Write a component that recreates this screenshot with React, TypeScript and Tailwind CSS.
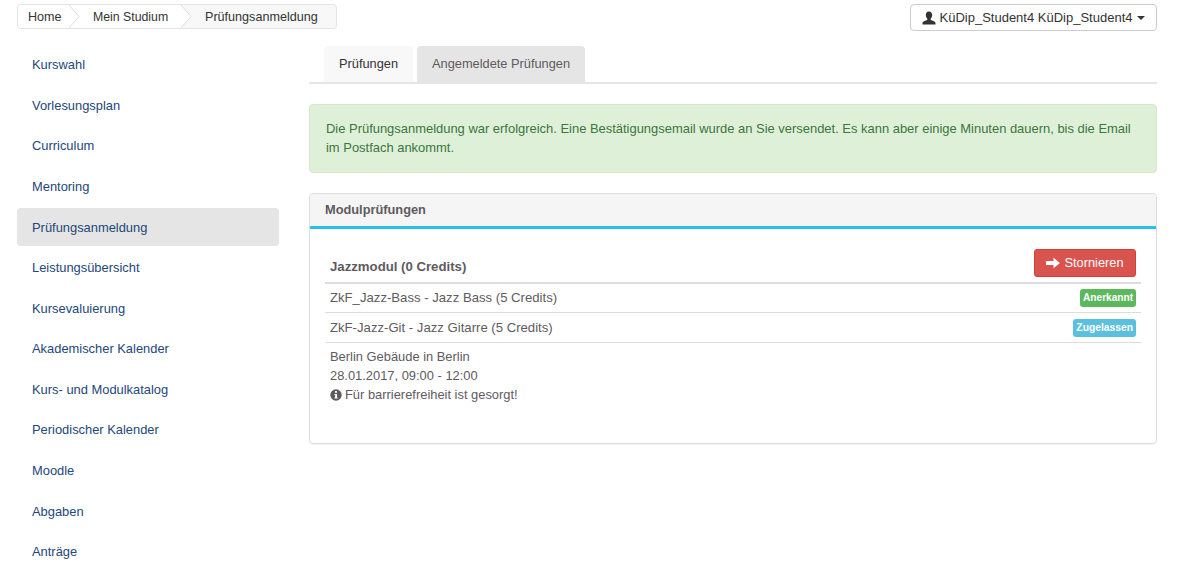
const NAV_ITEMS = [
  'Kurswahl',
  'Vorlesungsplan',
  'Curriculum',
  'Mentoring',
  'Prüfungsanmeldung',
  'Leistungsübersicht',
  'Kursevaluierung',
  'Akademischer Kalender',
  'Kurs- und Modulkatalog',
  'Periodischer Kalender',
  'Moodle',
  'Abgaben',
  'Anträge',
];

// Separator between breadcrumb items: left side takes the colour of the item before it
function CrumbArrow({ next }: { next: string }) {
  return (
    <svg viewBox="0 0 11 23" preserveAspectRatio="none" className="h-[23px] w-[11px] shrink-0" aria-hidden="true">
      <rect width="11" height="23" fill={next} />
      <path d="M0 0L10 11.500L0 23z" fill="#fff" />
      <path d="M0 0L10 11.500L0 23" fill="none" stroke="#dcdcdc" strokeWidth="1" />
    </svg>
  );
}

function UserIcon() {
  return (
    <svg viewBox="0 0 14 14" className="h-[14px] w-[14px] shrink-0" fill="#333" aria-hidden="true">
      <path d="M7 0.500c2 0 3.200 1.500 3.200 3.600 0 1.500-.6 2.900-1.500 3.700v1.100c1.700.6 4.800 1.400 4.800 3.100v1.500H.5V12c0-1.700 3.100-2.500 4.800-3.100V7.800C4.400 7 3.800 5.600 3.800 4.100 3.800 2 5 .5 7 .5z" />
    </svg>
  );
}

function ArrowIcon() {
  return (
    <svg viewBox="0 0 14 12" className="h-[12px] w-[14px] shrink-0" fill="#fff" aria-hidden="true">
      <path d="M0 4h7.500V.8L14 6l-6.500 5.200V8H0z" />
    </svg>
  );
}

function InfoIcon() {
  return (
    <svg viewBox="0 0 12 12" className="h-[12px] w-[12px] shrink-0" aria-hidden="true">
      <circle cx="6" cy="6" r="5.700" fill="#5f5a5f" />
      <rect x="5" y="2" width="2" height="1.800" fill="#fff" />
      <path d="M4.500 5h2.500v3.500h.7v1H4.500v-1h.6V6h-.6z" fill="#fff" />
    </svg>
  );
}

export default function App() {
  return (
    <div className="min-h-[567px] overflow-hidden bg-white pl-[17px] pr-[20px] font-['Liberation_Sans',Arial,sans-serif] text-[12.8px] leading-[20px] text-[#5f5a5f]">
      <header className="flex h-[46px] items-start justify-between pt-[4px]">
        <nav className="flex h-[25px] w-[320px] items-center rounded-[4px] border border-[#e5e5e5] bg-[#f8f8f8] text-[12.6px] text-[#333]">
          <span className="flex h-full w-[51px] items-center rounded-l-[4px] bg-white pl-[10px]">Home</span>
          <CrumbArrow next="#ffffff" />
          <span className="flex h-full w-[101px] items-center bg-white pl-[13px] text-[12.3px]">Mein Studium</span>
          <CrumbArrow next="#f8f8f8" />
          <span className="flex h-full items-center pl-[13px]">Prüfungsanmeldung</span>
        </nav>
        <button
          type="button"
          className="flex h-[27px] w-[247px] items-center justify-center gap-[4px] rounded-[4px] border border-[#cccccc] bg-white text-[13px] text-[#333]"
        >
          <UserIcon />
          <span>KüDip_Student4 KüDip_Student4</span>
          <span className="ml-px h-0 w-0 border-x-[4px] border-t-[4px] border-x-transparent border-t-[#333]" />
        </button>
      </header>

      <div className="flex gap-[30px]">
        <aside className="flex w-[262px] shrink-0 flex-col gap-[2.6px] text-[12.9px] text-[#23477a]">
          {NAV_ITEMS.map((item) => (
            <a
              key={item}
              className={`flex h-[38px] items-center rounded-[4px] px-[15px] ${item === 'Prüfungsanmeldung' ? 'bg-[#e5e5e5] pt-px' : ''}`}
            >
              {item}
            </a>
          ))}
        </aside>

        <main className="min-w-0 flex-1">
          <div className="flex h-[38px] gap-[4px] border-b-2 border-[#e5e5e5] pl-[15px]">
            <span className="flex h-[36px] items-center rounded-t-[4px] bg-[#f8f8f8] px-[15px] text-[#333]">Prüfungen</span>
            <span className="flex h-[36px] items-center rounded-t-[4px] bg-[#e5e5e5] px-[15px]">Angemeldete Prüfungen</span>
          </div>

          <div className="mt-[20px] h-[69px] rounded-[4px] border border-[#d6e9c6] bg-[#dff0d8] py-[14px] pl-[16px] pr-[20px] text-[12.95px] leading-[19px] text-[#3c763d]">
            Die Prüfungsanmeldung war erfolgreich. Eine Bestätigungsemail wurde an Sie versendet. Es kann aber einige Minuten dauern, bis die Email im Postfach ankommt.
          </div>

          <section className="mt-[20px] h-[251px] rounded-[4px] border border-[#dddddd] shadow-[0_1px_1px_rgba(0,0,0,0.05)]">
            <div className="flex h-[35px] items-center rounded-t-[4px] border-b-[3px] border-[#29c1e8] bg-[#f5f5f5] px-[15px] font-bold">
              Modulprüfungen
            </div>
            <div className="px-[15px] pt-[20px] text-[12.9px]">
              <div className="flex h-[35px] items-start justify-between border-b-2 border-[#dddddd] px-[5px]">
                <span className="pt-[8px] text-[13.2px] font-bold">Jazzmodul (0 Credits)</span>
                <button
                  type="button"
                  className="flex h-[28px] w-[102px] items-center justify-center gap-[4px] rounded-[3px] border border-[#d43f3a] bg-[#d9534f] text-[12.8px] text-white"
                >
                  <ArrowIcon />
                  Stornieren
                </button>
              </div>
              <div className="flex h-[29px] items-center justify-between border-b border-[#dddddd] px-[5px]">
                <span className="text-[13.15px]">ZkF_Jazz-Bass - Jazz Bass (5 Credits)</span>
                <span className="rounded-[3px] bg-[#5cb85c] px-[3px] py-[2px] text-[10.1px] font-bold leading-[14px] text-white">Anerkannt</span>
              </div>
              <div className="flex h-[30px] items-center justify-between border-b border-[#dddddd] px-[5px]">
                <span className="text-[13.15px]">ZkF-Jazz-Git - Jazz Gitarre (5 Credits)</span>
                <span className="rounded-[3px] bg-[#5bc0de] px-[3px] py-[2px] text-[10.3px] font-bold leading-[14px] text-white">Zugelassen</span>
              </div>
              <div className="px-[5px] pt-[4px] leading-[19px]">
                <div>Berlin Gebäude in Berlin</div>
                <div>28.01.2017, 09:00 - 12:00</div>
                <div className="flex items-center gap-[3px]">
                  <InfoIcon />
                  Für barrierefreiheit ist gesorgt!
                </div>
              </div>
            </div>
          </section>
        </main>
      </div>
    </div>
  );
}
